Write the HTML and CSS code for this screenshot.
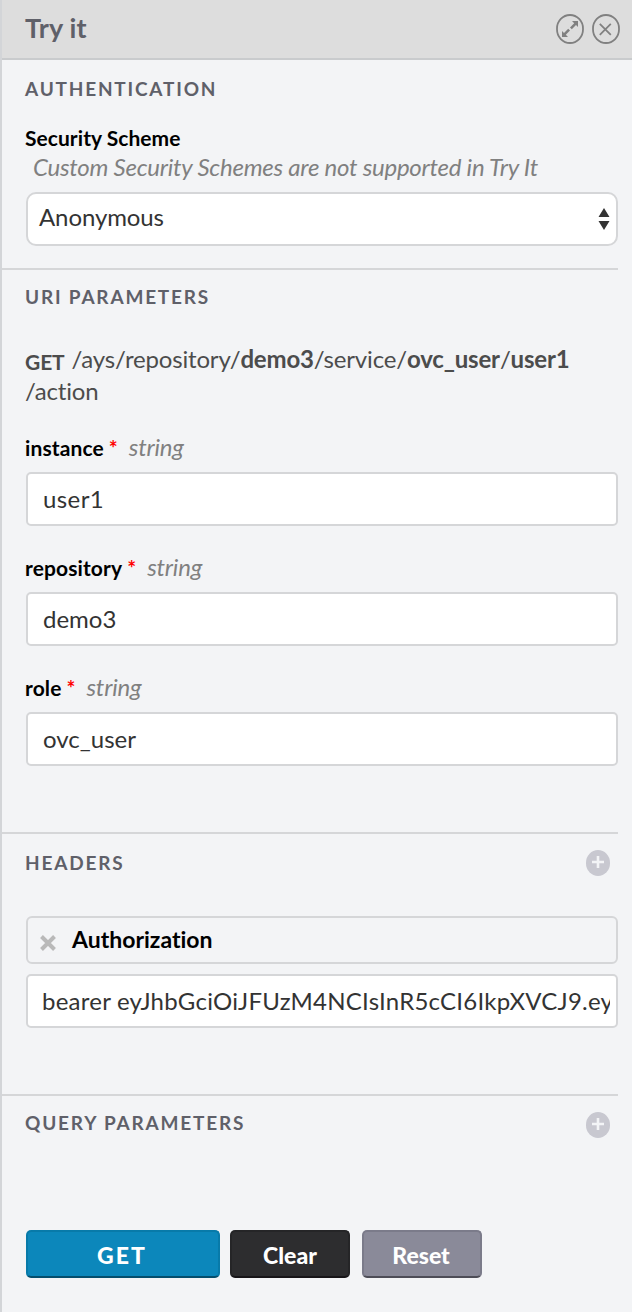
FILE: index.html
```html
<!DOCTYPE html>
<html lang="en">
<head>
<meta charset="utf-8">
<title>Try it</title>
<link rel="stylesheet" href="styles.css">
</head>
<body>
<main class="console">
  <header class="console-header">
    <h1 class="console-title">Try it</h1>
    <div class="console-tools">
      <svg class="tool" viewBox="0 0 28 30"><rect x="1" y="1" width="26" height="28" rx="13" ry="13.500" fill="none" stroke="#808080" stroke-width="1.800"/><path d="M16 7h6v6l-2-2-4.200 4.200-1.800-1.800 4.200-4.200zM6 17l2 2 4.200-4.200 1.800 1.800-4.200 4.200L12 23H6z" fill="#808080"/><path d="M12 13l4 4" stroke="#ddd" stroke-width="1"/></svg>
      <svg class="tool" viewBox="0 0 28 30"><rect x="1" y="1" width="26" height="28" rx="13" ry="13.500" fill="none" stroke="#808080" stroke-width="1.800"/><path d="M7.800 9.800l11 11M18.800 9.800l-11 11" fill="none" stroke="#808080" stroke-width="1.800"/></svg>
    </div>
  </header>

  <section class="section section-auth">
    <h2 class="section-title">AUTHENTICATION</h2>
    <div class="scheme-label">Security Scheme</div>
    <p class="scheme-note">Custom Security Schemes are not supported in Try It</p>
    <div class="select"><span>Anonymous</span>
      <svg class="select-arrows" viewBox="0 0 12 22"><path d="M6 0l5.500 9H.5zM6 22l5.500-9H.5z" fill="#333"/></svg>
    </div>
  </section>

  <section class="section section-uri">
    <h2 class="section-title">URI PARAMETERS</h2>
    <p class="path"><span class="verb">GET</span><span class="route">/ays/repository/<b>demo3</b>/service/<b>ovc_user</b>/<b>user1</b></span><br>/action</p>
    <div class="field">
      <div class="field-label"><b>instance</b><span class="required">*</span><i>string</i></div>
      <div class="input input-digit">user1</div>
    </div>
    <div class="field">
      <div class="field-label"><b>repository</b><span class="required">*</span><i>string</i></div>
      <div class="input">demo3</div>
    </div>
    <div class="field">
      <div class="field-label"><b>role</b><span class="required">*</span><i>string</i></div>
      <div class="input">ovc_user</div>
    </div>
  </section>

  <section class="section section-headers">
    <div class="section-bar">
      <h2 class="section-title">HEADERS</h2>
      <svg class="add" viewBox="0 0 24 26"><rect width="24" height="26" rx="12" ry="12.500" fill="#c8c8d0"/><path d="M12 6v12M6 12h12" stroke="#f3f4f6" stroke-width="2.600"/></svg>
    </div>
    <div class="header-name">
      <svg class="remove" viewBox="0 0 16 16"><path d="M1.500 1.500l13 13M14.500 1.500l-13 13" stroke="#b9b9b9" stroke-width="4"/></svg>
      <b>Authorization</b>
    </div>
    <div class="input header-value"><span>bearer eyJhbGciOiJFUzM4NCIsInR5cCI6IkpXVCJ9.ey</span></div>
  </section>

  <section class="section section-query">
    <div class="section-bar">
      <h2 class="section-title">QUERY PARAMETERS</h2>
      <svg class="add" viewBox="0 0 24 26"><rect width="24" height="26" rx="12" ry="12.500" fill="#c8c8d0"/><path d="M12 6v12M6 12h12" stroke="#f3f4f6" stroke-width="2.600"/></svg>
    </div>
    <div class="actions">
      <button class="button button-get">GET</button>
      <button class="button button-clear">Clear</button>
      <button class="button button-reset">Reset</button>
    </div>
  </section>
</main>
</body>
</html>
```
FILE: styles.css
```css
* { box-sizing: border-box; }
body { margin: 0; background: #f3f4f6; font-family: Lato, "Liberation Sans", sans-serif; font-size: 24px; color: #333; font-variant-ligatures: none; }
h1, h2, p { margin: 0; }
svg { display: block; flex: none; }

.console { height: 1312px; border-left: 2px solid #d3d5d8; overflow: hidden; }
.console-header { height: 60px; background: #ddd; border-bottom: 2px solid #c9cbcd; display: flex; justify-content: space-between; padding: 0 12px 0 23px; margin-left: -2px; border-left: 2px solid #d5d5d7; }
.console-title { font-size: 27px; line-height: 56px; font-weight: 700; letter-spacing: 0.2px; color: #5f6069; }
.console-tools { display: flex; gap: 8px; padding-top: 14px; }
.tool { width: 28px; height: 30px; }

.section { margin-right: 14px; padding-left: 23px; border-bottom: 2px solid #d5d6d8; }
.section-title { font-size: 19px; line-height: 24px; font-weight: 700; letter-spacing: 1.8px; color: #5f6069; white-space: nowrap; }
.section-auth { height: 210px; padding-top: 17px; }
.scheme-label { margin-top: 24px; font-size: 21px; line-height: 26px; font-weight: 700; letter-spacing: 0.05px; color: #000; }
.scheme-note { margin: 1px 0 0 8px; font-style: italic; line-height: 30px; letter-spacing: -0.24px; color: #808080; white-space: nowrap; }
.select { margin: 10px 0 0 1px; height: 54px; border: 2px solid #d5d6d8; border-radius: 10px; background: #fff; display: flex; align-items: center; justify-content: space-between; padding: 0 6px 0 11px; letter-spacing: -0.1px; }
.select span { padding-bottom: 5px; }
.select-arrows { width: 12px; height: 22px; }

.section-uri { height: 564px; padding-top: 15px; }
.path { height: 64px; margin-top: 34px; line-height: 32px; letter-spacing: -0.17px; color: #4c4c4c; white-space: nowrap; }
.verb { display: inline-block; width: 46.5px; height: 30px; font-size: 21px; line-height: 32px; font-weight: 700; letter-spacing: -0.1px; position: relative; top: 2px; }
.field { margin-top: 26px; }
.path + .field { margin-top: 25px; }
.field-label { height: 30px; margin-bottom: 10px; line-height: 30px; white-space: nowrap; }
.field-label b { font-size: 21px; letter-spacing: 0.12px; color: #000; }
.field-label i { margin-left: 11px; letter-spacing: -0.2px; color: #808080; }
.required { margin-left: 5px; font-size: 21px; font-weight: 700; color: #f00; }
.input { height: 54px; margin-left: 1px; border: 2px solid #d5d6d8; border-radius: 5px; background: #fff; padding-left: 15px; line-height: 50px; }
.input-digit { letter-spacing: 0.4px; }

.section-headers { height: 262px; padding-top: 16px; }
.section-headers .section-title { line-height: 26px; }
.section-bar { display: flex; justify-content: space-between; height: 26px; padding-right: 8px; }
.add { width: 24px; height: 26px; }
.header-name { margin: 40px 0 0 1px; height: 48px; border: 2px solid #d5d6d8; border-radius: 6px; display: flex; align-items: center; gap: 16px; padding-left: 12px; font-size: 23px; color: #000; }
.header-name b { padding-bottom: 2px; }
.remove { width: 16px; height: 16px; margin-top: 6px; }
.header-value { margin-top: 10px; padding: 0 6px 0 14px; letter-spacing: 0.24px; }
.header-value span { display: block; overflow: hidden; white-space: nowrap; }

.section-query { border-bottom: 0; padding-top: 16px; }
.section-query .section-title { line-height: 22px; }
.actions { display: flex; padding: 92px 0 0 1px; }
.button { height: 48px; border: 2px solid; border-radius: 5px; padding: 1px 0 0; color: #fff; font: 900 23px Lato, "Liberation Sans", sans-serif; text-align: center; }
.button-get { width: 194px; background: #0c87bb; border-color: #087aa9 #087aa9 #044e6d; letter-spacing: 2px; padding-right: 2px; }
.button-clear { width: 120px; margin-left: 10px; background: #2d2d2f; border-color: #252527 #252527 #171518; }
.button-reset { width: 120px; margin-left: 12px; background: #8a8a99; border-color: #7b7b8a #7b7b8a #4d4d57; padding-right: 2px; }
```
